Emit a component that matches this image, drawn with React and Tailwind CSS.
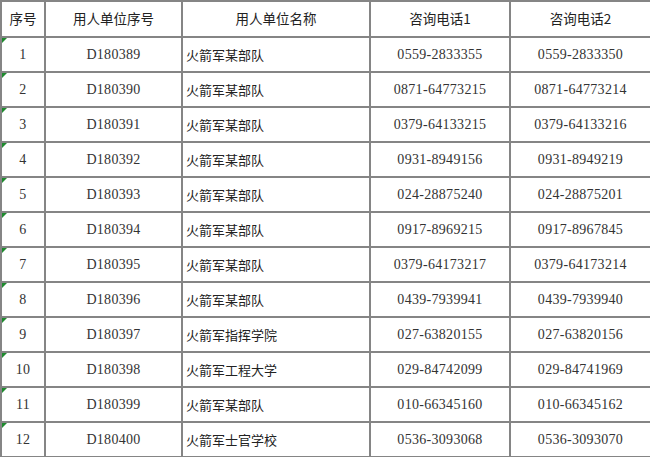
import React from "react";

const rows = [
  ["1", "D180389", "火箭军某部队", "0559-2833355", "0559-2833350"],
  ["2", "D180390", "火箭军某部队", "0871-64773215", "0871-64773214"],
  ["3", "D180391", "火箭军某部队", "0379-64133215", "0379-64133216"],
  ["4", "D180392", "火箭军某部队", "0931-8949156", "0931-8949219"],
  ["5", "D180393", "火箭军某部队", "024-28875240", "024-28875201"],
  ["6", "D180394", "火箭军某部队", "0917-8969215", "0917-8967845"],
  ["7", "D180395", "火箭军某部队", "0379-64173217", "0379-64173214"],
  ["8", "D180396", "火箭军某部队", "0439-7939941", "0439-7939940"],
  ["9", "D180397", "火箭军指挥学院", "027-63820155", "027-63820156"],
  ["10", "D180398", "火箭军工程大学", "029-84742099", "029-84741969"],
  ["11", "D180399", "火箭军某部队", "010-66345160", "010-66345162"],
  ["12", "D180400", "火箭军士官学校", "0536-3093068", "0536-3093070"],
];

const cjk = { fontFamily: '"Noto Sans CJK SC", "Noto Sans", sans-serif' };
const serif = { fontFamily: '"Liberation Serif", "Noto Sans CJK SC", serif' };

export default function App() {
  return (
    <div className="w-[650px] h-[457px] bg-white overflow-hidden">
      <table className="table-fixed border-collapse w-[650px] text-[#222]">
        <colgroup>
          <col className="w-[44px]" />
          <col className="w-[137px]" />
          <col className="w-[188px]" />
          <col className="w-[140px]" />
          <col className="w-[141px]" />
        </colgroup>
        <thead>
          <tr className="h-[36px]">
            {["序号", "用人单位序号", "用人单位名称", "咨询电话1", "咨询电话2"].map((h) => (
              <th
                key={h}
                style={cjk}
                className="border-2 border-[#858585] text-[13.5px] font-normal text-center p-0 leading-none"
              >
                {h}
              </th>
            ))}
          </tr>
        </thead>
        <tbody>
          {rows.map((r) => (
            <tr key={r[0]} className="h-[35px]">
              <td
                style={serif}
                className="relative border-2 border-[#858585] text-center text-[14px] tracking-[0.3px] p-0 text-[#333]"
              >
                <span className="absolute left-0 top-0 w-0 h-0 border-t-[5px] border-t-[#1f8a2e] border-r-[5px] border-r-transparent" />
                {r[0]}
              </td>
              <td style={serif} className="border-2 border-[#858585] text-center text-[14px] tracking-[0.3px] p-0 text-[#333]">
                {r[1]}
              </td>
              <td style={cjk} className="border-2 border-[#858585] text-left pl-[3px] text-[13px] p-0">
                {r[2]}
              </td>
              <td style={serif} className="border-2 border-[#858585] text-center text-[14px] tracking-[0.3px] p-0 text-[#333]">
                {r[3]}
              </td>
              <td style={serif} className="border-2 border-[#858585] text-center text-[14px] tracking-[0.3px] p-0 text-[#333]">
                {r[4]}
              </td>
            </tr>
          ))}
        </tbody>
      </table>
    </div>
  );
}
